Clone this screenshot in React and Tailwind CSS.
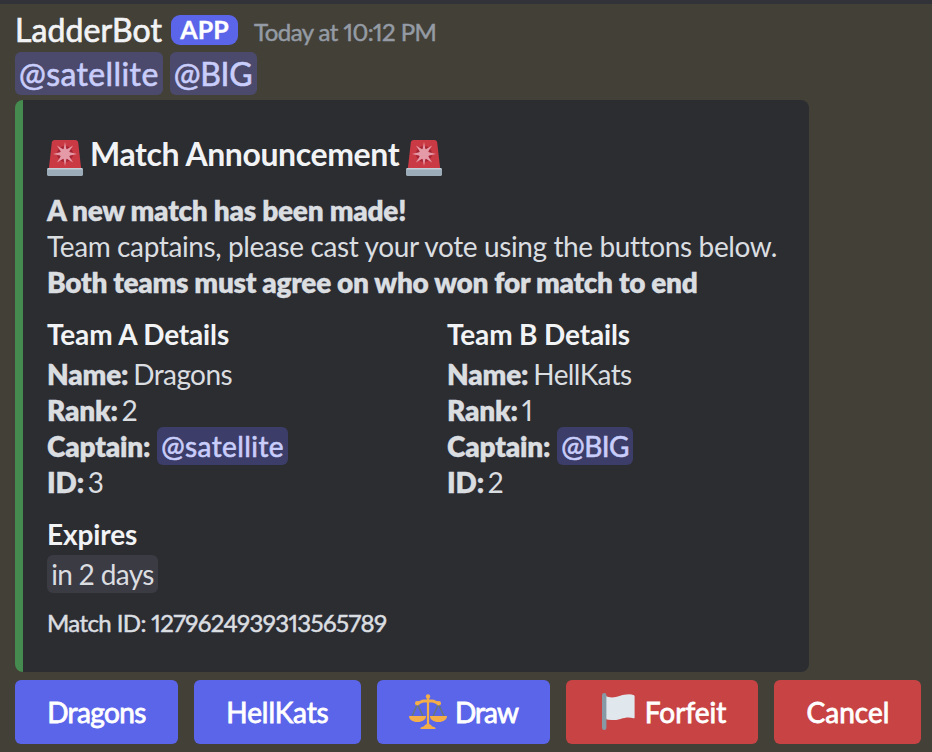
function Siren() {
  return (
    <svg viewBox="0 0 36 36" className="size-9 shrink-0">
      <path fill="#CA3A44" d="M4.800 2.500C5 1 6 0 7.600 0h20.800c1.600 0 2.600 1 2.800 2.500L34.200 29H1.800z" />
      <circle cx="18" cy="14" r="8" fill="#A62434" />
      <path fill="#E59AA7" d="M18 2l1.500 7.500 6.600-4.100-4.200 6.600L30 14l-8.100 1.800 4.200 6.700-6.600-4.100L18 26l-1.500-7.600-6.600 4.100 4.200-6.700L6 14l8.100-2-4.200-6.600 6.600 4.100z" />
      <circle cx="18" cy="14" r="5" fill="#E59AA7" />
      <path fill="#9BABB8" d="M0 30c0-1.100.9-2 2-2h32c1.100 0 2 .9 2 2v4.500c0 .8-.7 1.500-1.500 1.500h-33C.7 36 0 35.300 0 34.500z" />
      <path fill="#C3D0DA" d="M0 29.500c0-1 .9-1.500 2-1.500h32c1.100 0 2 .5 2 1.500z" />
    </svg>
  );
}

function Scales() {
  return (
    <svg viewBox="0 0 38 36" className="h-9 w-[38px] shrink-0">
      <path fill="none" stroke="#66757F" strokeWidth="1.700" d="M8.500 10L3.200 22M8.500 10l5.300 12M29.500 10l-5.300 12M29.500 10l5.300 12" />
      <path fill="none" stroke="#F4AE49" strokeWidth="2.900" strokeLinecap="round" d="M8 9.300c3.500-.2 4-2.300 7-2.300h8c3 0 3.500 2.100 7 2.300" />
      <path fill="#F4AE49" d="M17.900 2h2.200v29h-2.200z" />
      <circle cx="19" cy="2.500" r="2.200" fill="#F4AE49" />
      <circle cx="8.300" cy="9.300" r="2.300" fill="#F4AE49" />
      <circle cx="29.700" cy="9.300" r="2.300" fill="#F4AE49" />
      <path fill="#F4AE49" d="M0 22h17c0 3.600-3.400 6-8.500 6S0 25.600 0 22zM21 22h17c0 3.600-3.400 6-8.500 6S21 25.600 21 22zM13 33c2.500-.3 2.500-3 6-3s3.500 2.700 6 3c1.200.2 1.500.8 1.500 2H11.500c0-1.200.3-1.800 1.500-2z" />
    </svg>
  );
}

function Flag() {
  return (
    <svg viewBox="0 0 36 38" className="h-[38px] w-9 shrink-0">
      <path fill="#E1E8ED" d="M4 2.500c5 3 10 2 14.500.5S29 .5 33 2.200c.4.200.6.500.6 1v21.300c0 .7-.5 1-1.100.8-4.500-1.400-8-.8-13 .6-5.500 1.500-11 1.600-15.500.1z" />
      <rect x="1" y="0" width="4.400" height="37" rx="2.200" fill="#8899A6" />
    </svg>
  );
}

function Mention({ className, children }) {
  return (
    <span className={"flex items-center rounded-md px-1 text-[#c9cdfb] [-webkit-text-stroke:0.6px] " + className}>
      {children}
    </span>
  );
}

function Row({ label, children }) {
  return (
    <div className="flex h-9 items-center">
      <b className="font-extrabold tracking-[-0.2px] [-webkit-text-stroke:0.3px]">{label}:</b>
      {children}
    </div>
  );
}

function Value({ className, children }) {
  return <span className={"ml-[5px] " + className}>{children}</span>;
}

function Team({ title, name, rank, captain, captainClass, id }) {
  return (
    <div className="w-[400px] shrink-0">
      <h2 className="mb-1 h-9 font-bold tracking-[-0.15px] text-[#f2f3f5]">{title}</h2>
      <Row label="Name"><Value className="tracking-[-0.6px]">{name}</Value></Row>
      <Row label="Rank"><Value className="-translate-x-px">{rank}</Value></Row>
      <Row label="Captain">
        <Mention className={"ml-[7px] h-[38px] bg-[#3c3d68] " + captainClass}>{captain}</Mention>
      </Row>
      <Row label="ID"><Value className="-translate-x-px">{id}</Value></Row>
    </div>
  );
}

function Button({ className, children }) {
  return (
    <button className={"flex h-16 shrink-0 items-center justify-center rounded-md text-[28px] text-white [-webkit-text-stroke:0.8px] " + className}>
      {children}
    </button>
  );
}

export default function App() {
  return (
    <div className="h-[752px] w-[932px] overflow-hidden border-t-4 border-[#313338] bg-[#434038] pl-[15px] font-[Lato,sans-serif] proportional-nums">
      <header className="flex h-12 items-center pt-1">
        <span className="w-[147px] text-[32px] tracking-[0.1px] text-[#f2f3f5] [-webkit-text-stroke:0.7px]">LadderBot</span>
        <span className="ml-[9px] flex h-[30px] w-[67px] items-center justify-center rounded-[9px] bg-[#5b65ea] text-[25px] font-bold text-white [-webkit-text-stroke:0.3px]">APP</span>
        <span className="ml-4 pt-1 text-2xl tracking-[-0.55px] text-[#949ba4] [-webkit-text-stroke:0.5px]">Today at 10:12 PM</span>
      </header>
      <div className="flex gap-[7px]">
        <Mention className="h-[43px] bg-[#4b4a6c] text-[32px] tracking-[0.4px]">@satellite</Mention>
        <Mention className="h-[43px] w-[87px] bg-[#4b4a6c] text-[32px] tracking-[-0.3px]">@BIG</Mention>
      </div>
      <section className="mt-[5px] h-[572px] w-[794px] rounded-lg border-l-8 border-[#458b50] bg-[#2b2d31] pt-[34px] pl-6 text-[28px] leading-9 text-[#dbdee1]">
        <h1 className="flex h-10 items-center gap-[7px] text-[32px] font-bold tracking-[-0.4px] text-[#f2f3f5]">
          <span className="pt-2"><Siren /></span>
          Match Announcement
          <span className="pt-2"><Siren /></span>
        </h1>
        <div className="mt-[18px] whitespace-nowrap">
          <p className="font-extrabold tracking-[-0.25px] [-webkit-text-stroke:0.3px]">A new match has been made!</p>
          <p className="tracking-[-0.38px]">Team captains, please cast your vote using the buttons below.</p>
          <p className="font-extrabold tracking-[-0.3px] [-webkit-text-stroke:0.3px]">Both teams must agree on who won for match to end</p>
        </div>
        <div className="mt-4 flex">
          <Team title="Team A Details" name="Dragons" rank="2" captain="@satellite" captainClass="w-[131px] tracking-[0.4px]" id="3" />
          <Team title="Team B Details" name="HellKats" rank="1" captain="@BIG" captainClass="w-[76px] tracking-[-0.5px]" id="2" />
        </div>
        <h2 className="mt-4 font-bold tracking-[-0.1px] text-[#f2f3f5]">Expires</h2>
        <span className="mt-[3px] flex h-[38px] w-[111px] items-center justify-center rounded-md bg-[#3b3b44] tracking-[-0.6px]">in 2 days</span>
        <p className="mt-[12px] text-2xl leading-9 tracking-[-0.6px] [-webkit-text-stroke:0.5px]">Match ID: 1279624939313565789</p>
      </section>
      <div className="mt-2 flex gap-4">
        <Button className="w-[163px] bg-[#5b65ea] tracking-[-0.6px]">Dragons</Button>
        <Button className="w-[167px] bg-[#5b65ea] tracking-[-0.1px]">HellKats</Button>
        <Button className="w-[173px] gap-2 bg-[#5b65ea] tracking-[-0.9px]"><Scales />Draw</Button>
        <Button className="w-[192px] gap-2 bg-[#c84444] pl-[3px]"><Flag />Forfeit</Button>
        <Button className="w-[147px] bg-[#c84444] pl-px">Cancel</Button>
      </div>
    </div>
  );
}
